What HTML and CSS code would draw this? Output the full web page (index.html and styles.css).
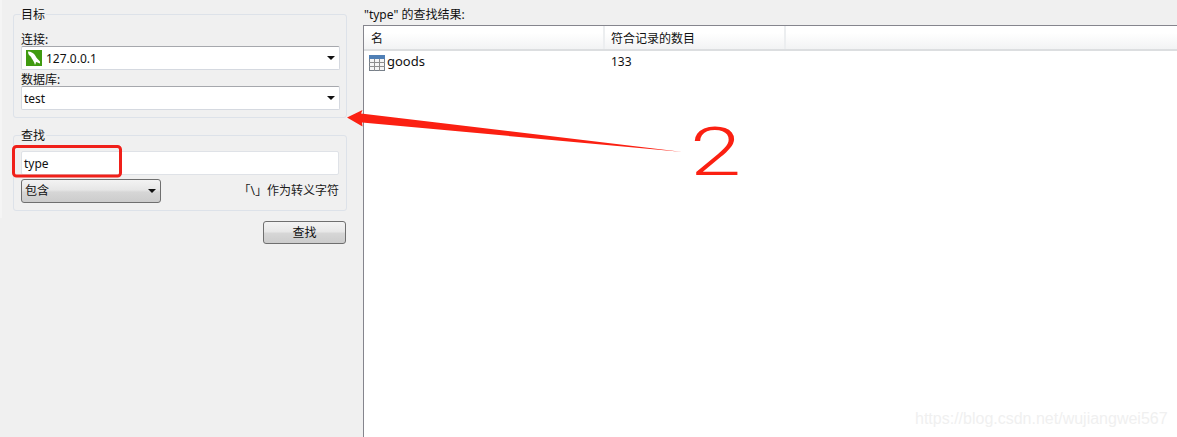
FILE: index.html
```
<!DOCTYPE html>
<html lang="zh">
<head>
<meta charset="utf-8">
<title>查找</title>
<link rel="stylesheet" href="styles.css">
</head>
<body>
<div class="app">
  <aside class="side">
    <fieldset class="group target">
      <legend>目标</legend>
      <div class="field-label">连接:</div>
      <div class="combo">
        <svg class="db-icon" viewBox="0 0 16 16" width="16" height="16"><rect width="16" height="16" fill="#3f9a10"/><path d="M2 1.5C5 1.5 8 3 9.5 6C10.5 8 12 9.5 14 11.5L14 13.5C12 12.5 11 12.5 10 12C10 13 9.5 14 9 15C8.5 13 7.5 11 6.5 9.5C5.5 8 5 6.5 3.5 5.5C2.5 4.5 2 3 2 1.5Z" fill="#fff"/></svg>
        <span class="combo-text">127.0.0.1</span>
        <span class="caret"></span>
      </div>
      <div class="field-label second">数据库:</div>
      <div class="combo plain">
        <span class="combo-text">test</span>
        <span class="caret"></span>
      </div>
    </fieldset>
    <fieldset class="group search">
      <legend>查找</legend>
      <div class="input"><span class="combo-text">type</span></div>
      <div class="options">
        <div class="select"><span>包含</span><span class="caret"></span></div>
        <span class="escape">「\」作为转义字符</span>
      </div>
    </fieldset>
    <div class="actions"><button class="btn" type="button">查找</button></div>
  </aside>
  <main class="results">
    <div class="results-title">"type" 的查找结果:</div>
    <div class="table">
      <div class="thead">
        <div class="th name">名</div>
        <div class="th count">符合记录的数目</div>
        <div class="th rest"></div>
      </div>
      <div class="row">
        <div class="td name">
          <svg class="tb-icon" viewBox="0 0 16 16" width="16" height="16">
            <rect x="0.5" y="0.5" width="15" height="15" fill="#f4f4f4" stroke="#77808a"/>
            <rect x="0" y="0" width="16" height="4" fill="#4f7fb5"/>
            <path d="M5.5 4V16M10.5 4V16M0 7.5H16M0 11.5H16" stroke="#8d8d8d" stroke-width="1" fill="none"/>
          </svg>
          <span class="tname">goods</span>
        </div>
        <div class="td count">133</div>
      </div>
    </div>
  </main>
</div>
<svg class="marks" viewBox="0 0 1177 437" width="1177" height="437">
  <rect x="13.5" y="146.5" width="107" height="29.5" rx="3" fill="none" stroke="#f0201a" stroke-width="3"/>
  <path d="M347 117.5L362.5 110L361 113.5L683 152L362 122.5L362.5 126.5Z" fill="#fb2012"/>
</svg>
<div class="scrawl">2</div>
<div class="watermark">https://blog.csdn.net/wujiangwei567</div>
</body>
</html>
```
FILE: styles.css
```
* { box-sizing: border-box; }
html, body { margin: 0; padding: 0; width: 1177px; height: 437px; overflow: hidden; }
body { position: relative; background: #fff; color: #111; font: 12px/16px "Noto Sans", "Noto Sans CJK SC", sans-serif; }
.app { display: flex; height: 437px; }
.side { width: 363px; flex: none; padding: 14px 16px 0 13px; background: linear-gradient(#f5f5f5, #f5f5f5) no-repeat 0 0 / 2px 218px, #f0f0f0; }
.group { margin: 0; border: 1px solid #dde2e9; border-radius: 3px; min-width: 0; width: 334px; }
.group legend { padding: 0 1px 0 0; margin-left: 0; line-height: 16px; height: 14px; }
.target { height: 111px; padding: 0 6px 0 7px; margin-top: -7px; }
.field-label { height: 14px; line-height: 16px; padding-top: 1px; }
.target .field-label { margin-top: 10px; }
.target .field-label.second { margin-top: 1px; }
.combo, .input { display: flex; align-items: center; height: 24px; background: #fff; border: 1px solid #d5d9e0; border-radius: 2px; }
.combo { border-top-color: #a6a8ad; padding: 0 4px; width: 319px; margin-top: 1px; }
.combo.plain { padding-left: 2px; }
.db-icon { flex: none; margin-right: 4px; }
.combo-text { flex: 1; padding-top: 1px; }
.caret { flex: none; width: 0; height: 0; border-left: 4px solid transparent; border-right: 4px solid transparent; border-top: 4px solid #111; }
.search { height: 83px; margin-top: 10px; padding: 0 7px; }
.input { width: 318px; margin-top: 9px; padding: 0 2px; border-color: #dfe2e7; }
.options { display: flex; align-items: center; justify-content: space-between; margin-top: 4px; width: 318px; }
.select { display: flex; align-items: center; justify-content: space-between; width: 140px; height: 24px; padding: 0 4px 0 3px; border: 1px solid #6f6f6f; border-radius: 3px; background: linear-gradient(#f3f3f3, #e6e6e6 45%, #d6d6d6 55%, #cccccc); }
.escape { color: #1b1b1b; }
.actions { display: flex; justify-content: flex-end; margin-top: 10px; width: 333px; }
.btn { width: 83px; height: 23px; padding: 0; border: 1px solid #6f6f6f; border-radius: 3px; background: linear-gradient(#f3f3f3, #e8e8e8 45%, #d6d6d6 55%, #cccccc); color: #111; font: inherit; }
.results { flex: 1; background: #f0f0f0; min-width: 0; display: flex; flex-direction: column; }
.results-title { height: 25px; padding: 7px 0 0 1px; line-height: 16px; }
.table { flex: 1; background: #fff; border-top: 1px solid #85858d; border-left: 1px solid #85858d; }
.thead { display: flex; height: 25px; background: linear-gradient(#fff 30%, #f2f3f4); border-bottom: 2px solid #dcdee0; }
.th { border-right: 2px solid #eceef0; padding: 5px 0 0 7px; line-height: 16px; }
.th.name { width: 241px; }
.th.count { width: 181px; padding-left: 6px; }
.th.rest { flex: 1; border-right: 0; }
.row { display: flex; height: 22px; align-items: center; }
.td.name { width: 241px; display: flex; align-items: center; padding-left: 5px; }
.tb-icon { flex: none; margin-right: 2px; margin-top: 1px; }
.tname { font-size: 13px; line-height: 16px; padding-bottom: 2px; }
.td.count { padding-left: 6px; }
.marks { position: absolute; left: 0; top: 0; pointer-events: none; }
.scrawl { position: absolute; left: 690px; top: 113px; color: #fb2012; font: 300 66px/80px "Roboto", sans-serif; transform: scaleX(1.4); transform-origin: left top; }
.watermark { position: absolute; left: 915px; top: 409px; color: #f0f0f0; font: 16px/20px "Liberation Sans", sans-serif; }
```
